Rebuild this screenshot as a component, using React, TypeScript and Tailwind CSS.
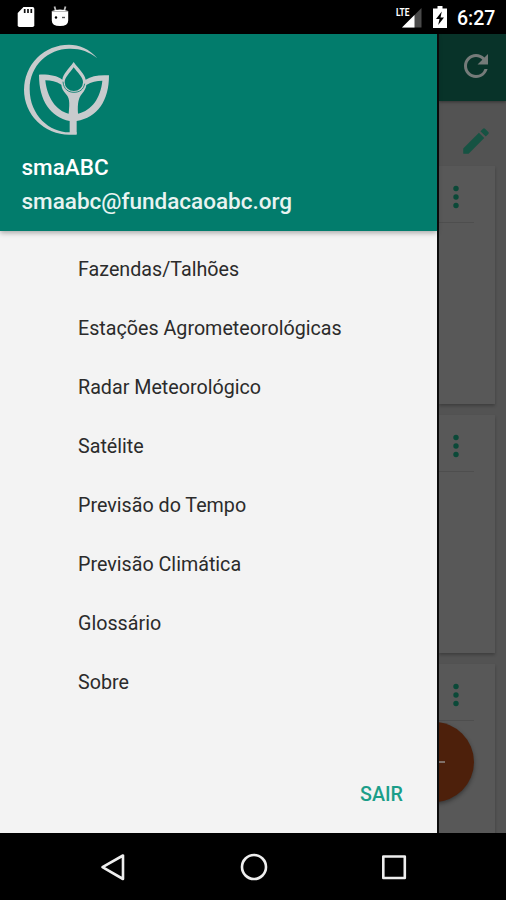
import { MdEdit, MdRefresh } from "react-icons/md";

const MENU_ITEMS = [
    "Fazendas/Talhões",
    "Estações Agrometeorológicas",
    "Radar Meteorológico",
    "Satélite",
    "Previsão do Tempo",
    "Previsão Climática",
    "Glossário",
    "Sobre",
];

function StatusBar() {
    return (
        <header className="flex h-[34px] shrink-0 items-center bg-black pl-[17px] pr-[10px] text-white">
            {/* SD card */}
            <svg className="h-[22px] w-[18px]" viewBox="0 0 18 22">
                <path d="M6.5 1h9q1.8 0 1.8 1.800v16.500q0 1.800-1.800 1.800h-13q-1.800 0-1.800-1.800V7z" fill="#fff" />
                <path d="M7.700 3v4M11 3v4M14.300 3v4" stroke="#111" strokeWidth="1.700" />
            </svg>
            {/* Android debug head */}
            <svg className="ml-4 h-[22px] w-[18px]" viewBox="0 0 18 22">
                <path d="M3.500 0.500l1.500 5M14.500 0.500l-1.500 5" stroke="#bbb" strokeWidth="1.800" />
                <path d="M.8 5q4-1.500 8.200-1.500t8.200 1.500v9.500q0 5.500-8.200 5.500t-8.200-5.500z" fill="#fff" />
                <path d="M1 5.500h16" stroke="#bbb" strokeWidth="1" />
                <circle cx="5" cy="11.500" r="1.200" />
                <path d="M11 11.500h3" stroke="#555" strokeWidth="1.400" />
            </svg>
            <div className="flex-1" />
            <svg className="h-[22px] w-[28px]" viewBox="0 0 28 22">
                <path d="M26.500 2v19.500H7z" fill="#4a4a4a" />
                <path d="M19.500 9v12.500H7z" fill="#fff" />
                <text x="1" y="10" fill="#fff" stroke="#000" strokeWidth="1" paintOrder="stroke" fontSize="11.500" fontWeight="700" textLength="13.500" lengthAdjust="spacingAndGlyphs">LTE</text>
            </svg>
            <svg className="ml-[10px] h-[22px] w-[14px]" viewBox="0 0 14 22">
                <path d="M4.500 0h5v2.500H14V22H0V2.500h4.500z" fill="#fff" />
                <path d="M8.800 5.500L3 13h3.500l-1.300 6L11 11.500H7.500z" fill="#000" />
            </svg>
            <span className="ml-[10px] mt-[3px] w-[39px] whitespace-nowrap text-[19.500px] font-medium leading-none">6:27</span>
        </header>
    );
}

function Logo() {
    return (
        <svg className="h-[94px] w-[90px]" viewBox="66 28 270 282" fill="#c8cbcd">
            <path d="M292 74C268 45 237 33 207 33A135 135 0 0 0 207 303H230V296H207C150 296 89 246 89 166C89 94 146 46 207 45C240 44 266 53 292 74z" />
            <path
                fillRule="evenodd"
                d="M117 123C148 122 170 126 187 138C189 121 205 107 221 85C237 107 254 121 257 138C275 127 297 123 327 125C327 202 292 252 230 262V300H209V262C152 250 117 202 117 123z
                M136 140C141 192 168 231 206 240C210 202 208 192 197 180C189 171 185 163 184 153C168 143 153 140 136 140z
                M307 141C302 192 276 230 234 240C232 208 236 192 246 180C254 171 258 163 259 154C274 144 290 141 307 141z
                M221 101C210 118 194 130 194 146A27.500 26 0 0 0 249 146C249 130 233 118 221 101z"
            />
            <path d="M189 144C191 167 205 176 222 176C238 176 251 168 254 150" fill="none" stroke="#027c6c" strokeWidth="2.500" />
        </svg>
    );
}

function MoreDots() {
    return (
        <svg className="h-6 w-2" viewBox="0 0 8 24" fill="#0b4938">
            <circle cx="4" cy="3.500" r="2.700" />
            <circle cx="4" cy="12" r="2.700" />
            <circle cx="4" cy="20.500" r="2.700" />
        </svg>
    );
}

function Card() {
    return (
        <div className="mr-[11px] h-[238px] shrink-0 bg-[#585858] shadow-[0_2px_3px_rgba(0,0,0,0.25)]">
            <div className="mr-[21px] flex h-[57px] items-center border-b border-[#4e4e4e] pl-[13px] pt-[6px]">
                <MoreDots />
            </div>
        </div>
    );
}

function Drawer() {
    return (
        <aside className="z-10 flex w-[437px] shrink-0 flex-col bg-[#f3f3f3]">
            <div className="flex h-[197px] shrink-0 flex-col bg-[#027c6c] pl-[21.500px] pt-[9px] text-[22.500px] font-medium text-white shadow-[0_2px_5px_rgba(0,0,0,0.3)]">
                <Logo />
                <p className="mt-[13px] leading-[34px]">smaABC</p>
                <p className="leading-[34px] text-[#e8f3f1]">smaabc@fundacaoabc.org</p>
            </div>
            <nav className="flex flex-1 flex-col pt-[9px]">
                {MENU_ITEMS.map((item) => (
                    <a key={item} className="flex h-[59.100px] items-center pl-[78px] text-[19.700px] text-[#2b2b2b]">
                        {item}
                    </a>
                ))}
            </nav>
            <button className="mb-[23px] mr-[34px] self-end text-[19.700px] font-medium leading-[30px] text-[#1b9e89]">SAIR</button>
        </aside>
    );
}

function DimmedPage() {
    return (
        <main className="relative flex flex-1 flex-col overflow-hidden border-l-2 border-[#0c0c0c] bg-[#535353]">
            <div className="flex h-[67px] shrink-0 items-center justify-end bg-[#083329] pr-[12px] shadow-[0_1px_3px_rgba(0,0,0,0.4)]">
                <MdRefresh className="mt-[-4px] size-9 text-[#757b79]" />
            </div>
            <div className="flex h-[65px] shrink-0 items-end justify-end pb-[8px] pr-[13px]">
                <MdEdit className="size-[34px] text-[#165343]" />
            </div>
            <div className="flex flex-col gap-[11px]">
                <Card />
                <Card />
                <Card />
            </div>
            {/* Floating add button, half hidden by the drawer */}
            <div className="absolute -left-[45px] top-[688px] flex size-[80px] items-center justify-center rounded-full bg-[#4d200b] shadow-[0_2px_4px_rgba(0,0,0,0.4)]">
                <span className="h-[2px] w-[22px] bg-[#807068]" />
            </div>
        </main>
    );
}

function NavigationBar() {
    return (
        <footer className="flex h-[67px] shrink-0 items-center justify-between bg-black pl-[99px] pr-[98px]">
            <svg className="size-7" viewBox="0 0 28 28" fill="none" stroke="#eee" strokeWidth="2.600" strokeLinejoin="round">
                <path d="M24 2.500v23.500L3.500 14.200z" />
            </svg>
            <svg className="size-7" viewBox="0 0 28 28" fill="none" stroke="#eee" strokeWidth="2.600">
                <circle cx="14" cy="14" r="12" />
            </svg>
            <svg className="size-7" viewBox="0 0 28 28" fill="none" stroke="#eee" strokeWidth="2.600" strokeLinejoin="round">
                <rect x="3.300" y="3.500" width="21.500" height="21.500" />
            </svg>
        </footer>
    );
}

export default function App() {
    return (
        <div className="flex h-[900px] w-[506px] flex-col overflow-hidden bg-black font-[Roboto,sans-serif]">
            <StatusBar />
            <div className="flex h-[799px] shrink-0">
                <Drawer />
                <DimmedPage />
            </div>
            <NavigationBar />
        </div>
    );
}
